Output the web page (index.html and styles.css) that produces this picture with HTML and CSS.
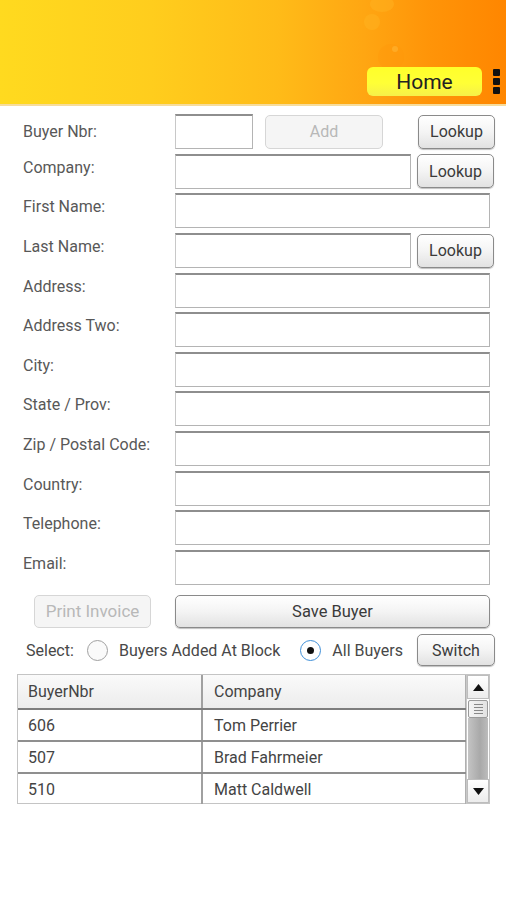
FILE: index.html
```html
<!DOCTYPE html>
<html>
<head>
<meta charset="utf-8">
<link rel="stylesheet" href="styles.css">
</head>
<body>
<header class="topbar">
  <div class="splat s1"></div>
  <div class="splat s2"></div>
  <div class="splat s3"></div>
  <div class="splat s4"></div>
  <div class="topbar-actions">
    <div class="home-btn">Home</div>
    <div class="menu-dots"><span></span><span></span><span></span></div>
  </div>
</header>

<main class="form">
  <div class="row first">
    <label class="lbl">Buyer Nbr:</label>
    <div class="inp w-small"></div>
    <div class="btn disabled w-add">Add</div>
    <div class="btn w-lookup push">Lookup</div>
  </div>
  <div class="row">
    <label class="lbl">Company:</label>
    <div class="inp w-mid"></div>
    <div class="btn w-lookup">Lookup</div>
  </div>
  <div class="row">
    <label class="lbl">First Name:</label>
    <div class="inp w-full"></div>
  </div>
  <div class="row">
    <label class="lbl">Last Name:</label>
    <div class="inp w-mid"></div>
    <div class="btn w-lookup">Lookup</div>
  </div>
  <div class="row"><label class="lbl">Address:</label><div class="inp w-full"></div></div>
  <div class="row"><label class="lbl">Address Two:</label><div class="inp w-full"></div></div>
  <div class="row"><label class="lbl">City:</label><div class="inp w-full"></div></div>
  <div class="row"><label class="lbl">State / Prov:</label><div class="inp w-full"></div></div>
  <div class="row"><label class="lbl">Zip / Postal Code:</label><div class="inp w-full"></div></div>
  <div class="row"><label class="lbl">Country:</label><div class="inp w-full"></div></div>
  <div class="row"><label class="lbl">Telephone:</label><div class="inp w-full"></div></div>
  <div class="row"><label class="lbl">Email:</label><div class="inp w-full"></div></div>

  <div class="actions">
    <div class="btn disabled w-print">Print Invoice</div>
    <div class="btn w-save">Save Buyer</div>
  </div>

  <div class="select-row">
    <span class="sel-lbl">Select:</span>
    <span class="radio"></span>
    <span class="radio-txt">Buyers Added At Block</span>
    <span class="radio on"></span>
    <span class="radio-txt">All Buyers</span>
    <div class="btn w-switch">Switch</div>
  </div>

  <div class="grid">
    <div class="grid-body">
      <div class="g-row head"><div class="c1">BuyerNbr</div><div class="c2">Company</div></div>
      <div class="g-row"><div class="c1">606</div><div class="c2">Tom Perrier</div></div>
      <div class="g-row"><div class="c1">507</div><div class="c2">Brad Fahrmeier</div></div>
      <div class="g-row"><div class="c1">510</div><div class="c2">Matt Caldwell</div></div>
    </div>
    <div class="scroll">
      <div class="sb-btn"><svg width="11" height="7" viewBox="0 0 11 7"><path d="M0 7 L5.5 0 L11 7 Z" fill="#111"/></svg></div>
      <div class="sb-thumb"><i></i><i></i><i></i><i></i></div>
      <div class="sb-track"></div>
      <div class="sb-btn"><svg width="11" height="7" viewBox="0 0 11 7"><path d="M0 0 L11 0 L5.5 7 Z" fill="#111"/></svg></div>
    </div>
  </div>
</main>
</body>
</html>
```
FILE: styles.css
```css
* { box-sizing: border-box; }
html, body { margin: 0; padding: 0; background: #fff; }
body {
  width: 506px;
  font-family: Roboto, "Noto Sans", "Liberation Sans", sans-serif;
  font-size: 16px;
  color: #555;
}

.topbar {
  position: relative;
  height: 106px;
  background: linear-gradient(to right, #ffda1f 0%, #ffcd1d 30%, #ffbb18 55%, #ffa612 72%, #ff9408 85%, #ff8600 100%);
  border-bottom: 2px solid #f6dc9c;
  overflow: hidden;
  display: flex;
  justify-content: flex-end;
  align-items: flex-end;
  padding: 0 6px 8px 0;
}
.splat {
  position: absolute;
  border-radius: 50%;
  background: rgba(255, 185, 40, 0.35);
}
.s1 { left: 364px; top: 14px; width: 16px; height: 16px; }
.s2 { left: 378px; top: 44px; width: 26px; height: 26px; background: rgba(255,150,10,0.3); }
.s3 { left: 370px; top: -4px; width: 24px; height: 16px; }
.s4 { left: 392px; top: 46px; width: 6px; height: 6px; background: rgba(255,200,80,0.35); }

.topbar-actions {
  position: relative;
  display: flex;
  align-items: center;
  gap: 9px;
}
.home-btn {
  width: 115px;
  height: 29px;
  border-radius: 6px;
  background: linear-gradient(to bottom, #ffff2a 0%, #ffff36 55%, #f6f04a 100%);
  color: #222;
  font-size: 21px;
  display: flex;
  align-items: center;
  justify-content: center;
  padding-top: 1px;
  margin-right: 2px;
}
.menu-dots {
  display: flex;
  flex-direction: column;
  gap: 2px;
}
.menu-dots span {
  width: 7px;
  height: 7px;
  background: #111;
  border-radius: 1px;
}

.form {
  padding: 6px 0 0 23px;
}
.row {
  display: flex;
  align-items: center;
  height: 39.6px;
}
.lbl {
  width: 152px;
  flex: none;
  padding-bottom: 8px;
  color: #585858;
}
.row.first .lbl { padding-bottom: 0; }

.inp {
  height: 35px;
  border: 1px solid #b4b4b4;
  border-top: 2px solid #8e8e8e;
  border-left-color: #c8c8c8;
  background: #fff;
  flex: none;
}
.w-small { width: 78px; }
.w-mid { width: 236px; }
.w-full { width: 315px; }

.btn {
  height: 34px;
  border: 1px solid #8a8a8a;
  border-radius: 5px;
  background: linear-gradient(to bottom, #ffffff 0%, #f4f4f4 50%, #e2e2e2 100%);
  box-shadow: 0 1px 1px rgba(0,0,0,0.25);
  color: #3a3a3a;
  display: flex;
  align-items: center;
  justify-content: center;
  flex: none;
  font-size: 16px;
}
.btn.disabled {
  border-color: #d6d6d6;
  background: #f5f5f5;
  box-shadow: none;
  color: #b8b8b8;
}
.w-add { width: 118px; margin-left: 12px; }
.w-lookup { width: 77px; margin-left: 6px; }
.w-lookup.push { margin-left: 35px; }

.actions {
  display: flex;
  align-items: center;
  height: 40px;
  padding-top: 8px;
}
.actions .btn { height: 33px; }
.w-print { width: 117px; margin-left: 11px; font-size: 17px; }
.w-save { width: 315px; margin-left: 24px; font-size: 16.5px; }

.select-row {
  display: flex;
  align-items: center;
  height: 44px;
  padding-left: 3px;
  padding-top: 2px;
  padding-right: 11px;
  color: #484848;
}
.sel-lbl { width: 61px; }
.radio {
  width: 21px;
  height: 21px;
  border-radius: 50%;
  border: 1.5px solid #a0a0a0;
  background: #fafafa;
  margin-right: 11px;
  display: flex;
  align-items: center;
  justify-content: center;
  flex: none;
}
.radio.on {
  border-color: #3f8fd8;
  background: #fff;
  margin-left: 20px;
}
.radio.on::after {
  content: "";
  width: 7px;
  height: 7px;
  border-radius: 50%;
  background: #111;
}
.w-switch { width: 78px; height: 32px; margin-left: auto; }

.grid {
  display: flex;
  margin: 3px 0 0 -6px;
  width: 473px;
  border: 1px solid #c4c4c4;
  height: 130px;
}
.grid-body { width: 450px; }
.g-row {
  display: flex;
  height: 32px;
  border-bottom: 2px solid #8f8f8f;
  color: #444;
}
.g-row:last-child { border-bottom: none; height: 30px; }
.g-row.head {
  height: 35px;
  background: linear-gradient(to bottom, #fafafa, #ececec);
  border-bottom: 2px solid #7d7d7d;
}
.c1, .c2 {
  display: flex;
  align-items: center;
  padding-left: 10px;
}
.c1 { width: 185px; border-right: 2px solid #a0a0a0; }
.c2 { flex: 1; padding-left: 11px; border-right: 1px solid #b0b0b0; }

.scroll {
  width: 23px;
  display: flex;
  flex-direction: column;
  background: #fff;
  border-left: 1px solid #c8c8c8;
}
.sb-btn {
  height: 24px;
  display: flex;
  align-items: center;
  justify-content: center;
  background: linear-gradient(to bottom, #fff, #ececec);
  border: 1px solid #bdbdbd;
}
.sb-thumb {
  height: 18px;
  margin: 1px 1px 0 1px;
  border: 1px solid #9a9a9a;
  border-radius: 2px;
  background: linear-gradient(to right, #f4f4f4, #e2e2e2);
  display: flex;
  flex-direction: column;
  justify-content: center;
  align-items: center;
  gap: 2px;
}
.sb-thumb i {
  display: block;
  width: 9px;
  height: 1px;
  background: #888;
}
.sb-track {
  flex: 1;
  background: linear-gradient(to right, #c4c4c4, #a9a9a9 60%, #bcbcbc);
  margin: 0 1px;
}
```
